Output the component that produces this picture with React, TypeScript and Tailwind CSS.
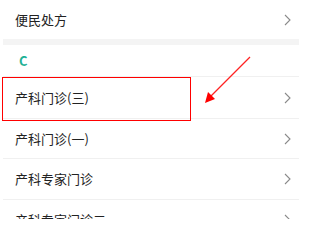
import React from "react";

const font = { fontFamily: '"Noto Sans CJK SC", "Liberation Sans", sans-serif' };

function Chevron() {
  return (
    <svg width="7" height="12" viewBox="0 0 7 12" fill="none" className="shrink-0">
      <path d="M1 1l5 5-5 5" stroke="#8a8a8a" strokeWidth="1.1" />
    </svg>
  );
}

function Row({ label, height = "h-10", highlight = false }: { label: string; height?: string; highlight?: boolean }) {
  return (
    <div className={`relative flex items-center justify-between pl-3 pr-[8px] border-b border-[#f0f0f0] ${height}`}>
      <span className="text-[13px] text-[#222]">{label}</span>
      <Chevron />
      {highlight && <div className="absolute -left-px top-0 w-[189px] h-[44px] border border-[#f00]" />}
    </div>
  );
}

export default function App() {
  return (
    <div className="relative w-[299px] h-[219px] overflow-hidden bg-white" style={font}>
      <div className="ml-[3px]">
        <div className="flex items-center justify-between pl-3 pr-[8px] h-[39px]">
          <span className="text-[13px] text-[#222]">便民处方</span>
          <Chevron />
        </div>
        <div className="h-[6px] bg-[#f4f4f4]" />
        <div className="h-[32px] flex items-center pl-4 border-b border-[#f0f0f0]">
          <span className="text-[13px] font-bold text-[#1fb196]">C</span>
        </div>
        <Row label="产科门诊(三)" height="h-[42px]" highlight />
        <Row label="产科门诊(一)" height="h-10" />
        <Row label="产科专家门诊" height="h-[41px]" />
        <Row label="产科专家门诊二" height="h-10" />
      </div>
      <svg className="absolute left-0 top-0" width="299" height="219" viewBox="0 0 299 219">
        <line x1="250" y1="57" x2="210" y2="97" stroke="#f22" strokeWidth="1.3" />
        <polygon points="205,103 208,92 215,99" fill="#f00" />
      </svg>
    </div>
  );
}
